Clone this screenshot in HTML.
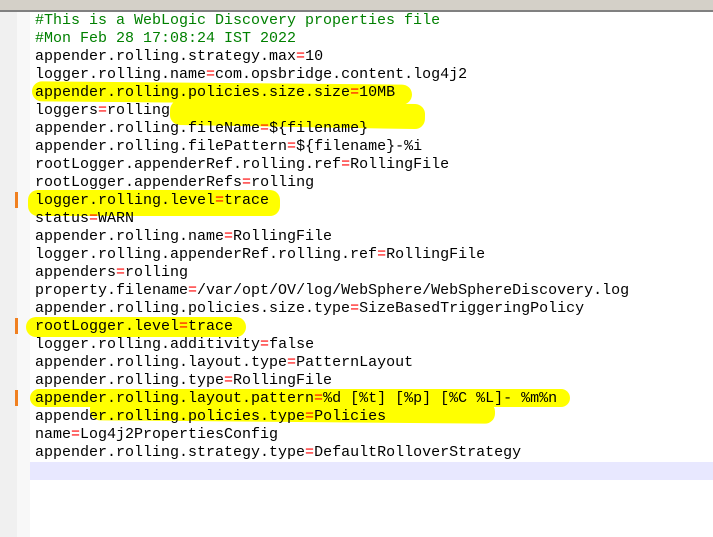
<!DOCTYPE html><html><head><style>
body{margin:0;width:713px;height:537px;background:#fff;position:relative;overflow:hidden;font-family:"Liberation Mono",monospace;font-size:15px}
.tabs{position:absolute;left:0;top:0;width:713px;height:10px;background:#d4d0c8}
.tabline{position:absolute;left:0;top:10px;width:713px;height:2px;background:#808080}
.gut{position:absolute;left:0;top:12px;width:17px;height:525px;background:#f0f0f0}
.gut2{position:absolute;left:17px;top:12px;width:13px;height:525px;background:#f8f8f8}
.cur{position:absolute;left:30px;top:462px;width:683px;height:18px;background:#e8e8ff}
.hl{position:absolute;background:#ffff00;border-radius:10px}
.mk{position:absolute;left:15px;width:3px;height:16px;background:#f08020}
.w{position:absolute;left:0;top:2px;width:713px;height:500px}
.l{position:absolute;left:35px;height:18px;line-height:18px;white-space:pre;color:#000}
.c{color:#008000}.e{color:#f00}
</style></head><body>
<div class="tabs"></div><div class="tabline"></div>
<div class="gut"></div><div class="gut2"></div><div class="cur"></div>
<div class="hl" style="left:32px;top:83px;width:380px;height:20px;transform:rotate(0.5deg)"></div>
<div class="hl" style="left:170px;top:102px;width:255px;height:25px;transform:rotate(1deg)"></div>
<div class="hl" style="left:28px;top:190px;width:252px;height:26px"></div>
<div class="hl" style="left:26px;top:317px;width:220px;height:20px"></div>
<div class="hl" style="left:30px;top:389px;width:540px;height:18px"></div>
<div class="hl" style="left:90px;top:400px;width:405px;height:22px;transform:rotate(0.5deg)"></div>
<div class="mk" style="top:192px"></div><div class="mk" style="top:318px"></div><div class="mk" style="top:390px"></div>
<div class="w">
<div class="l c" style="top:10px">#This is a WebLogic Discovery properties file</div>
<div class="l c" style="top:28px">#Mon Feb 28 17:08:24 IST 2022</div>
<div class="l" style="top:46px">appender.rolling.strategy.max<span class="e">=</span>10</div>
<div class="l" style="top:64px">logger.rolling.name<span class="e">=</span>com.opsbridge.content.log4j2</div>
<div class="l" style="top:82px">appender.rolling.policies.size.size<span class="e">=</span>10MB</div>
<div class="l" style="top:100px">loggers<span class="e">=</span>rolling</div>
<div class="l" style="top:118px">appender.rolling.fileName<span class="e">=</span>${filename}</div>
<div class="l" style="top:136px">appender.rolling.filePattern<span class="e">=</span>${filename}-%i</div>
<div class="l" style="top:154px">rootLogger.appenderRef.rolling.ref<span class="e">=</span>RollingFile</div>
<div class="l" style="top:172px">rootLogger.appenderRefs<span class="e">=</span>rolling</div>
<div class="l" style="top:190px">logger.rolling.level<span class="e">=</span>trace</div>
<div class="l" style="top:208px">status<span class="e">=</span>WARN</div>
<div class="l" style="top:226px">appender.rolling.name<span class="e">=</span>RollingFile</div>
<div class="l" style="top:244px">logger.rolling.appenderRef.rolling.ref<span class="e">=</span>RollingFile</div>
<div class="l" style="top:262px">appenders<span class="e">=</span>rolling</div>
<div class="l" style="top:280px">property.filename<span class="e">=</span>/var/opt/OV/log/WebSphere/WebSphereDiscovery.log</div>
<div class="l" style="top:298px">appender.rolling.policies.size.type<span class="e">=</span>SizeBasedTriggeringPolicy</div>
<div class="l" style="top:316px">rootLogger.level<span class="e">=</span>trace</div>
<div class="l" style="top:334px">logger.rolling.additivity<span class="e">=</span>false</div>
<div class="l" style="top:352px">appender.rolling.layout.type<span class="e">=</span>PatternLayout</div>
<div class="l" style="top:370px">appender.rolling.type<span class="e">=</span>RollingFile</div>
<div class="l" style="top:388px">appender.rolling.layout.pattern<span class="e">=</span>%d [%t] [%p] [%C %L]- %m%n</div>
<div class="l" style="top:406px">appender.rolling.policies.type<span class="e">=</span>Policies</div>
<div class="l" style="top:424px">name<span class="e">=</span>Log4j2PropertiesConfig</div>
<div class="l" style="top:442px">appender.rolling.strategy.type<span class="e">=</span>DefaultRolloverStrategy</div>
</div>
</body></html>
